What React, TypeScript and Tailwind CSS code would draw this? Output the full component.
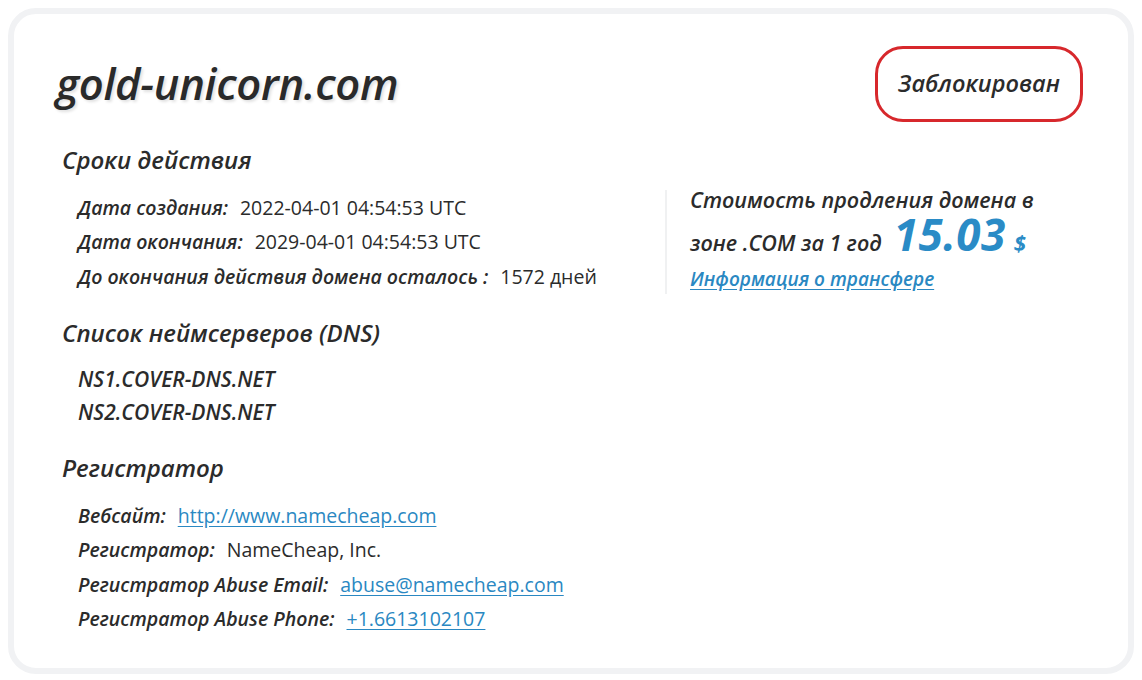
const head = "font-['Open_Sans',sans-serif] italic";
const val = "font-['Open_Sans',sans-serif] text-[19.5px] text-[#2b2b2b]";
const link = "font-['Open_Sans',sans-serif] text-[19.5px] text-[#2a88c2] underline underline-offset-[3px]";

function Row({ label, children }: { label: string; children: React.ReactNode }) {
  return (
    <div className="flex h-[34.5px] items-center gap-3 whitespace-nowrap">
      <span className={`${head} text-[19.5px] font-semibold text-[#2b2b2b]`}>{label}</span>
      {children}
    </div>
  );
}

function SectionTitle({ children }: { children: React.ReactNode }) {
  return <h2 className={`${head} h-[30px] text-[24px] leading-[30px] font-semibold text-[#2b2b2b]`}>{children}</h2>;
}

export default function App() {
  return (
    <div className="h-[680px] w-[1142px] bg-white p-2">
      <div className="h-[666px] rounded-[28px] border-[6px] border-[#f1f2f4] bg-white pt-8 pr-[45px] pl-[42px]">
        <div className="flex h-[76px] items-center justify-between">
          <h1 className={`${head} text-[43.5px] font-semibold tracking-[-0.3px] text-[#2a2a2a] [text-shadow:2px_2px_3px_rgba(0,0,0,0.12)]`}>
            gold-unicorn.com
          </h1>
          <div className={`${head} flex h-[76px] w-[208px] items-center justify-center rounded-[28px] border-[3px] border-[#d7282c] text-[23.5px] font-semibold text-[#2b2b2b]`}>
            Заблокирован
          </div>
        </div>

        <div className="mt-[23px] pl-[6px]">
          <SectionTitle>Сроки действия</SectionTitle>
          <div className="mt-[15px] flex">
            <div className="w-[603px] pl-[16px]">
              <Row label="Дата создания:">
                <span className={val}>2022-04-01 04:54:53 UTC</span>
              </Row>
              <Row label="Дата окончания:">
                <span className={val}>2029-04-01 04:54:53 UTC</span>
              </Row>
              <Row label="До окончания действия домена осталось :">
                <span className={val}>1572 дней</span>
              </Row>
            </div>
            <div className="border-l-2 border-[#f0f1f2] pl-[23px] whitespace-nowrap">
              <p className={`${head} -mt-[4px] text-[21.5px] leading-[28px] font-semibold text-[#2b2b2b]`}>
                Стоимость продления домена в
              </p>
              <p className={`${head} flex h-[50px] items-baseline gap-3 pt-[8px] text-[21.5px] leading-[42px] font-semibold text-[#2b2b2b]`}>
                зоне .COM за 1 год
                <span className="flex items-baseline gap-2">
                  <span className="text-[44px] leading-[24px] font-bold tracking-[0.5px] text-[#2a8bc6]">15.03</span>
                  <span className="text-[22px] leading-[24px] font-bold text-[#2a8bc6]">$</span>
                </span>
              </p>
              <a className={`${head} block text-[19px] leading-[30px] font-semibold text-[#2a88c2] underline underline-offset-[3px]`}>
                Информация о трансфере
              </a>
            </div>
          </div>

          <div className="mt-[24px]">
            <SectionTitle>Список неймсерверов (DNS)</SectionTitle>
            <div className="mt-[15px] pl-[16px]">
              <div className={`${head} flex h-[33px] items-center text-[21px] font-semibold text-[#2b2b2b]`}>NS1.COVER-DNS.NET</div>
              <div className={`${head} flex h-[33px] items-center text-[21px] font-semibold text-[#2b2b2b]`}>NS2.COVER-DNS.NET</div>
            </div>
          </div>

          <div className="mt-[24px]">
            <SectionTitle>Регистратор</SectionTitle>
            <div className="mt-[15px] pl-[16px]">
              <Row label="Вебсайт:">
                <a className={link}>http://www.namecheap.com</a>
              </Row>
              <Row label="Регистратор:">
                <span className={val}>NameCheap, Inc.</span>
              </Row>
              <Row label="Регистратор Abuse Email:">
                <a className={link}>abuse@namecheap.com</a>
              </Row>
              <Row label="Регистратор Abuse Phone:">
                <a className={link}>+1.6613102107</a>
              </Row>
            </div>
          </div>
        </div>
      </div>
    </div>
  );
}
